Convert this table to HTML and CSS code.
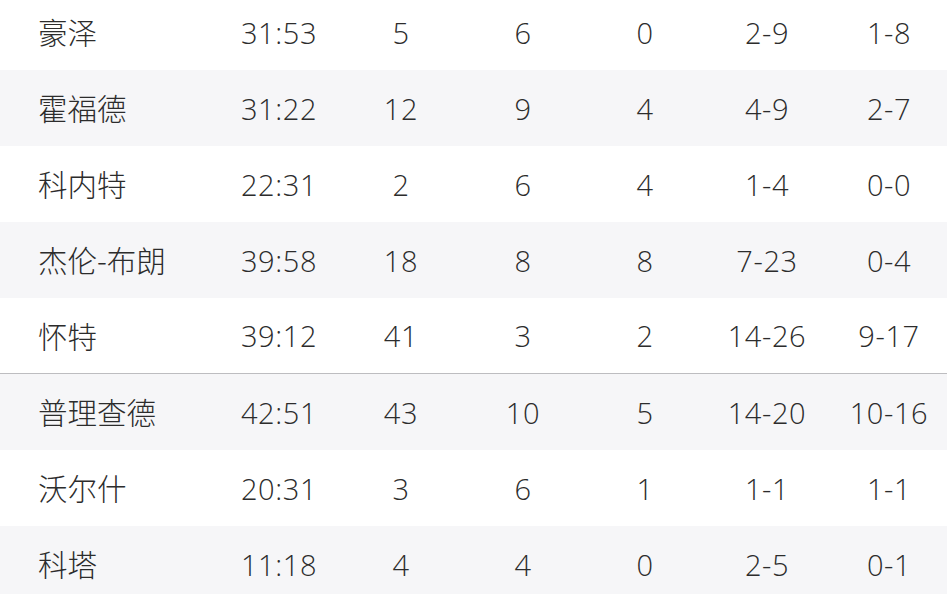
FILE: index.html
```html
<!DOCTYPE html>
<html lang="zh">
<head>
<meta charset="utf-8">
<link rel="stylesheet" href="styles.css">
</head>
<body>
<div class="table">
  <div class="row"><span class="name">豪泽</span><span>31:53</span><span>5</span><span>6</span><span>0</span><span>2-9</span><span>1-8</span></div>
  <div class="row alt"><span class="name">霍福德</span><span>31:22</span><span>12</span><span>9</span><span>4</span><span>4-9</span><span>2-7</span></div>
  <div class="row"><span class="name">科内特</span><span>22:31</span><span>2</span><span>6</span><span>4</span><span>1-4</span><span>0-0</span></div>
  <div class="row alt"><span class="name">杰伦-布朗</span><span>39:58</span><span>18</span><span>8</span><span>8</span><span>7-23</span><span>0-4</span></div>
  <div class="row divider"><span class="name">怀特</span><span>39:12</span><span>41</span><span>3</span><span>2</span><span>14-26</span><span>9-17</span></div>
  <div class="row alt"><span class="name">普理查德</span><span>42:51</span><span>43</span><span>10</span><span>5</span><span>14-20</span><span>10-16</span></div>
  <div class="row"><span class="name">沃尔什</span><span>20:31</span><span>3</span><span>6</span><span>1</span><span>1-1</span><span>1-1</span></div>
  <div class="row alt"><span class="name">科塔</span><span>11:18</span><span>4</span><span>4</span><span>0</span><span>2-5</span><span>0-1</span></div>
</div>
</body>
</html>
```
FILE: styles.css
```css
html, body {
  margin: 0;
  padding: 0;
  background: #ffffff;
  overflow: hidden;
}
body {
  width: 947px;
  height: 594px;
  font-family: "Open Sans", "Noto Sans", "Noto Sans CJK SC", sans-serif;
  color: #2c2c2c;
  font-size: 29px;
}
.table {
  margin-top: -6px;
  width: 950px;
}
.row {
  display: grid;
  grid-template-columns: 218px repeat(6, 122px);
  height: 76px;
  align-items: center;
  box-sizing: border-box;
  background: #ffffff;
}
.row.alt {
  background: #f6f6f8;
}
.row.divider {
  border-bottom: 1px solid #bdbdc0;
}
.row span {
  text-align: center;
  line-height: 1;
  white-space: nowrap;
  letter-spacing: 0.6px;
  font-weight: 350;
}
.row .name {
  text-align: left;
  padding-left: 38px;
  font-family: "Noto Sans CJK SC", sans-serif;
  font-size: 29.5px;
  font-weight: 300;
  letter-spacing: 0;
}
```
